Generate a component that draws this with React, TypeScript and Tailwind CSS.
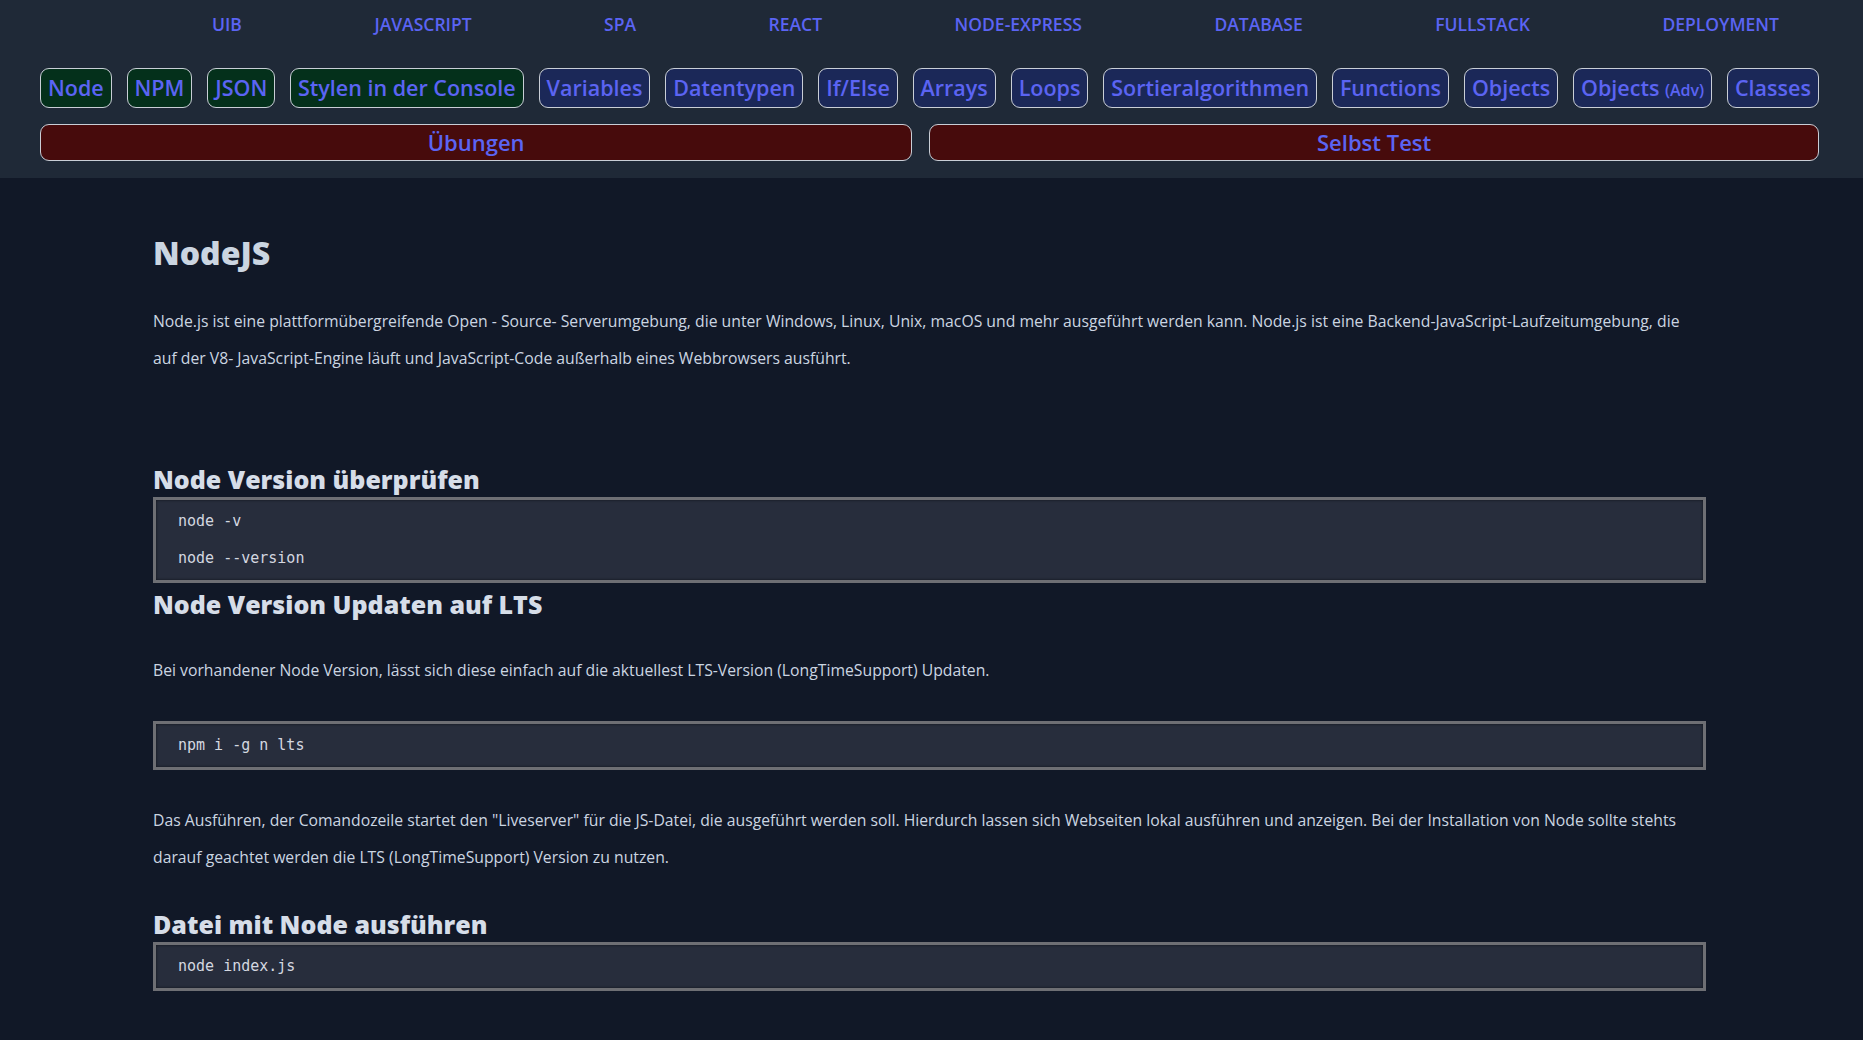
import React from "react";

const navLinks = ["UIB", "JAVASCRIPT", "SPA", "REACT", "NODE-EXPRESS", "DATABASE", "FULLSTACK", "DEPLOYMENT"];

const greenTabs = ["Node", "NPM", "JSON", "Stylen in der Console"];
const blueTabs = ["Variables", "Datentypen", "If/Else", "Arrays", "Loops", "Sortieralgorithmen", "Functions", "Objects"];

function Tab({ children, green }: { children: React.ReactNode; green?: boolean }) {
  return (
    <a
      href="#"
      className={
        "px-[7px] h-[40px] flex items-center rounded-[9px] border border-[#c9ced6] text-[21.5px] font-semibold text-[#5b64f3] whitespace-nowrap " +
        (green ? "bg-[#04301b]" : "bg-[#1b2858]")
      }
    >
      {children}
    </a>
  );
}

function Code({ lines }: { lines: string[] }) {
  return (
    <pre className="border-[3px] border-[#6e6f74] bg-[#272d3c] shadow-[inset_0_0_3px_rgba(0,0,0,0.6)] pl-[22px] py-[3px] text-[15px] leading-[37px] text-[#d4d8e0] font-['DejaVu_Sans_Mono',monospace]">
      {lines.map((l, i) => (
        <div key={i}>{l}</div>
      ))}
    </pre>
  );
}

export default function App() {
  return (
    <div className="min-h-[1040px] bg-[#111827] font-['Open_Sans',sans-serif]">
      <header className="bg-[#1f2937] h-[178px] pl-[40px] pr-[44px]">
        <nav className="h-[48px] flex items-center justify-between pl-[172px] pr-[40px]">
          {navLinks.map((l) => (
            <a key={l} href="#" className="text-[17.5px] font-semibold text-[#5b64f3]">
              {l}
            </a>
          ))}
        </nav>
        <div className="mt-[20px] flex justify-between">
          {greenTabs.map((t) => (
            <Tab key={t} green>
              {t}
            </Tab>
          ))}
          {blueTabs.map((t) => (
            <Tab key={t}>{t}</Tab>
          ))}
          <Tab>
            Objects&nbsp;<span className="text-[16px] pt-[3px]">(Adv)</span>
          </Tab>
          <Tab>Classes</Tab>
        </div>
        <div className="mt-[16px] flex gap-[17px]">
          <a href="#" className="flex-auto h-[37px] flex items-center justify-center rounded-[9px] border border-[#c9ced6] bg-[#470b0c] text-[22px] font-semibold text-[#5b64f3]">
            Übungen
          </a>
          <a href="#" className="flex-auto h-[37px] flex items-center justify-center rounded-[9px] border border-[#c9ced6] bg-[#470b0c] text-[22px] font-semibold text-[#5b64f3]">
            Selbst Test
          </a>
        </div>
      </header>

      <main className="w-[1553px] ml-[153px] pt-[55px] pb-[40px] text-[#cbd5e1]">
        <h1 className="text-[32px] leading-[40px] font-extrabold text-[#cbd5e1]">NodeJS</h1>
        <p className="mt-[30px] text-[15.75px] leading-[37px]">
          Node.js ist eine plattformübergreifende Open - Source- Serverumgebung, die unter Windows, Linux, Unix, macOS und mehr ausgeführt werden kann. Node.js ist eine Backend-JavaScript-Laufzeitumgebung, die auf der V8- JavaScript-Engine läuft und JavaScript-Code außerhalb eines Webbrowsers ausführt.
        </p>

        <h2 className="mt-[86px] mb-[2px] text-[25px] leading-[32px] font-extrabold text-[#d6dde8]">Node Version überprüfen</h2>
        <Code lines={["node -v", "node --version"]} />

        <h2 className="mt-[5px] text-[25px] leading-[32px] font-extrabold text-[#d6dde8]">Node Version Updaten auf LTS</h2>
        <p className="my-[32px] text-[15.75px] leading-[37px]">
          Bei vorhandener Node Version, lässt sich diese einfach auf die aktuellest LTS-Version (LongTimeSupport) Updaten.
        </p>
        <Code lines={["npm i -g n lts"]} />
        <p className="my-[32px] text-[15.75px] leading-[37px]">
          Das Ausführen, der Comandozeile startet den "Liveserver" für die JS-Datei, die ausgeführt werden soll. Hierdurch lassen sich Webseiten lokal ausführen und anzeigen. Bei der Installation von Node sollte stehts darauf geachtet werden die LTS (LongTimeSupport) Version zu nutzen.
        </p>

        <h2 className="mt-[6px] mb-[2px] text-[25px] leading-[32px] font-extrabold text-[#d6dde8]">Datei mit Node ausführen</h2>
        <Code lines={["node index.js"]} />
      </main>
    </div>
  );
}
